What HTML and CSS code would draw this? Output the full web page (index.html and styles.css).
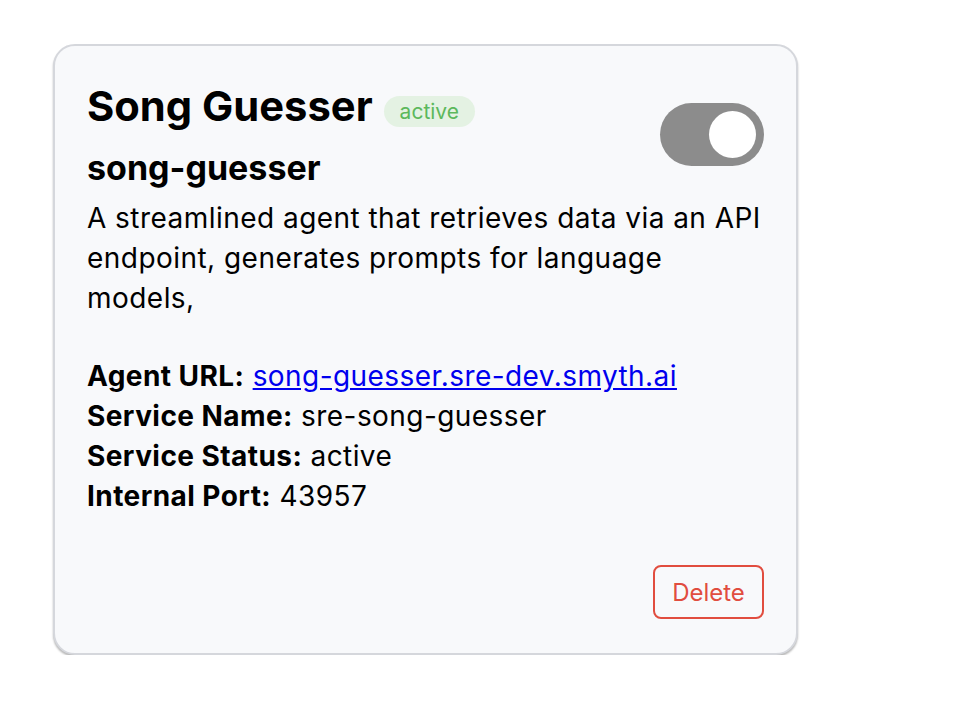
FILE: index.html
```html
<!DOCTYPE html>
<html>
<head>
<meta charset="utf-8">
<link rel="stylesheet" href="styles.css">
</head>
<body>
<div class="page">
  <div class="card">
    <div class="head">
      <div class="head-text">
        <div class="title-row">
          <h1 class="title">Song Guesser</h1>
          <span class="badge">active</span>
        </div>
        <h2 class="slug">song-guesser</h2>
      </div>
      <div class="toggle"><div class="knob"></div></div>
    </div>
    <p class="desc">A streamlined agent that retrieves data via an API endpoint, generates prompts for language models,</p>
    <div class="details">
      <div><b>Agent URL:</b> <a href="#">song-guesser.sre-dev.smyth.ai</a></div>
      <div><b>Service Name:</b> sre-song-guesser</div>
      <div><b>Service Status:</b> active</div>
      <div><b>Internal Port:</b> 43957</div>
    </div>
    <div class="actions">
      <button class="delete">Delete</button>
    </div>
  </div>
</div>
</body>
</html>
```

FILE: styles.css
```css
html, body {
  margin: 0;
  padding: 0;
  background: #ffffff;
}
body {
  font-family: Inter, "Noto Sans", sans-serif;
  color: #000;
}
.page {
  padding: 44px 0 0 53px;
}
.card {
  box-sizing: border-box;
  width: 745px;
  height: 611px;
  background: #f8f9fb;
  border: 2px solid #d5d7dc;
  border-radius: 22px;
  box-shadow: 0 2px 2px rgba(0,0,0,0.28);
  padding: 35px 32px 34px 32px;
  display: flex;
  flex-direction: column;
}
.head {
  display: flex;
  justify-content: space-between;
  align-items: flex-start;
}
.title-row {
  display: flex;
  align-items: center;
  gap: 11px;
}
.title {
  margin: 0;
  font-size: 41.7px;
  font-weight: 700;
  line-height: 50px;
}
.badge {
  margin-top: 10px;
  background: #e4f2e3;
  color: #5cb85c;
  font-size: 21px;
  line-height: 31px;
  padding: 0 16px;
  border-radius: 16px;
}
.slug {
  margin: 17px 0 0 0;
  font-size: 34px;
  font-weight: 700;
  line-height: 40px;
}
.toggle {
  margin-top: 22px;
  width: 104px;
  height: 63px;
  border-radius: 32px;
  background: #8c8c8c;
  position: relative;
}
.knob {
  position: absolute;
  top: 8px;
  right: 8px;
  width: 47px;
  height: 47px;
  border-radius: 50%;
  background: #fff;
}
.desc {
  margin: 10px 0 0 0;
  font-size: 28px;
  line-height: 40px;
  letter-spacing: 0.46px;
}
.details {
  margin-top: 38px;
  font-size: 28px;
  line-height: 40px;
  letter-spacing: 0.43px;
}
.details a {
  color: #0000ee;
}
.actions {
  margin-top: auto;
  display: flex;
  justify-content: flex-end;
}
.delete {
  font-family: Inter, "Noto Sans", sans-serif;
  font-size: 24px;
  color: #e14d3f;
  background: transparent;
  border: 2px solid #e14d3f;
  border-radius: 8px;
  width: 111px;
  height: 54px;
  padding: 0;
}
```
